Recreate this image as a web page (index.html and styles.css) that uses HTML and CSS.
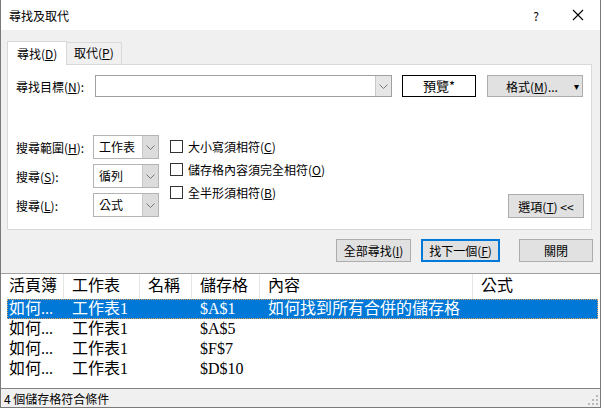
FILE: index.html
```html
<!DOCTYPE html>
<html lang="zh-Hant">
<head>
    <meta charset="UTF-8">
    <title>尋找及取代</title>
    <link rel="stylesheet" href="styles.css">
</head>
<body>
<div class="window">
    <div class="titlebar">
        <span class="title">尋找及取代</span>
        <span class="help">?</span>
        <span class="close">
            <svg width="12" height="12" viewBox="0 0 12 12"><path d="M1 1L11 11M11 1L1 11" stroke="#000" stroke-width="1.1" fill="none"/></svg>
        </span>
    </div>
    <div class="dialog">
        <div class="tabs">
            <span class="tab active">尋找(<u>D</u>)</span>
            <span class="tab">取代(<u>P</u>)</span>
        </div>
        <div class="panel">
            <div class="find_row">
                <span class="find_label">尋找目標(<u>N</u>):</span>
                <div class="find_input">
                    <span class="field"></span>
                    <span class="arrow"><svg width="9" height="5" viewBox="0 0 9 5"><path d="M0.5 0.5L4.5 4.5L8.5 0.5" stroke="#777" fill="none"/></svg></span>
                </div>
                <span class="preview">預覽*</span>
                <span class="btn format">格式(<u>M</u>)...<i class="caret">▾</i></span>
            </div>
            <div class="opts">
                <div class="combos">
                    <span class="opt_label">搜尋範圍(<u>H</u>):</span>
                    <div class="combo"><span class="val">工作表</span><span class="arrow"><svg width="9" height="5" viewBox="0 0 9 5"><path d="M0.5 0.5L4.5 4.5L8.5 0.5" stroke="#777" fill="none"/></svg></span></div>
                    <span class="opt_label">搜尋(<u>S</u>):</span>
                    <div class="combo"><span class="val">循列</span><span class="arrow"><svg width="9" height="5" viewBox="0 0 9 5"><path d="M0.5 0.5L4.5 4.5L8.5 0.5" stroke="#777" fill="none"/></svg></span></div>
                    <span class="opt_label">搜尋(<u>L</u>):</span>
                    <div class="combo"><span class="val">公式</span><span class="arrow"><svg width="9" height="5" viewBox="0 0 9 5"><path d="M0.5 0.5L4.5 4.5L8.5 0.5" stroke="#777" fill="none"/></svg></span></div>
                </div>
                <div class="checks">
                    <label class="check"><span class="box"></span>大小寫須相符(<u>C</u>)</label>
                    <label class="check"><span class="box"></span>儲存格內容須完全相符(<u>O</u>)</label>
                    <label class="check"><span class="box"></span>全半形須相符(<u>B</u>)</label>
                </div>
                <span class="btn options">選項(<u>T</u>) &lt;&lt;</span>
            </div>
        </div>
        <div class="actions">
            <span class="btn find_all">全部尋找(<u>I</u>)</span>
            <span class="btn find_next">找下一個(<u>F</u>)</span>
            <span class="btn close_btn">關閉</span>
        </div>
    </div>
    <div class="list">
        <div class="row head">
            <span class="c1">活頁簿</span><span class="c2">工作表</span><span class="c3">名稱</span><span class="c4">儲存格</span><span class="c5">內容</span><span class="c6">公式</span>
        </div>
        <div class="row sel">
            <span class="c1">如何...</span><span class="c2">工作表1</span><span class="c3"></span><span class="c4">$A$1</span><span class="c5">如何找到所有合併的儲存格</span><span class="c6"></span>
        </div>
        <div class="row">
            <span class="c1">如何...</span><span class="c2">工作表1</span><span class="c3"></span><span class="c4">$A$5</span><span class="c5"></span><span class="c6"></span>
        </div>
        <div class="row">
            <span class="c1">如何...</span><span class="c2">工作表1</span><span class="c3"></span><span class="c4">$F$7</span><span class="c5"></span><span class="c6"></span>
        </div>
        <div class="row">
            <span class="c1">如何...</span><span class="c2">工作表1</span><span class="c3"></span><span class="c4">$D$10</span><span class="c5"></span><span class="c6"></span>
        </div>
    </div>
    <div class="status">
        <span>4 個儲存格符合條件</span>
        <svg class="grip" width="10" height="10" viewBox="0 0 10 10" fill="#b8b8b8"><rect x="8" y="0" width="2" height="2"/><rect x="4" y="4" width="2" height="2"/><rect x="8" y="4" width="2" height="2"/><rect x="0" y="8" width="2" height="2"/><rect x="4" y="8" width="2" height="2"/><rect x="8" y="8" width="2" height="2"/></svg>
    </div>
</div>
</body>
</html>
```

FILE: styles.css
```css
html,body{margin:0;padding:0;}
body{font-family:"Noto Sans CJK TC","Noto Sans",sans-serif;font-size:12px;color:#000;}
u{text-decoration:underline;text-underline-offset:1px;}
.window{box-sizing:border-box;width:601px;height:408px;border:1px solid #7a7a7a;border-top:none;background:#f0f0f0;display:flex;flex-direction:column;overflow:hidden;}

.titlebar{height:30px;background:#fff;display:flex;align-items:center;flex:none;}
.title{padding-left:8px;flex:1;}
.help{width:20px;text-align:center;margin-right:26px;}
.close{width:12px;height:12px;margin-right:16px;display:flex;}

.dialog{padding:10px 0 0 6px;flex:none;}
.tabs{display:flex;align-items:flex-end;height:24px;}
.tab{box-sizing:border-box;height:22px;line-height:20px;padding:0 7px;border:1px solid #d9d9d9;border-bottom:none;background:#f0f0f0;}
.tab.active{height:24px;line-height:24px;width:60px;padding:0 0 0 9px;background:#fff;position:relative;top:1px;}
.tab+.tab{border-left:none;}

.panel{box-sizing:border-box;width:585px;height:166px;background:#fff;border:1px solid #d9d9d9;padding:10px 7px 0 8px;display:flex;flex-direction:column;}
.find_row{display:flex;align-items:center;height:22px;}
.find_label{width:79px;}
.find_input{box-sizing:border-box;width:297px;height:22px;border:1px solid #a0a0a0;display:flex;}
.find_input .field{flex:1;}
.arrow{width:15px;background:#e6e6e6;border-left:1px solid #c8c8c8;display:flex;align-items:center;justify-content:center;}
.preview{box-sizing:border-box;width:74px;height:22px;margin-left:10px;border:1px solid #000;text-align:center;line-height:20px;font-size:13px;}
.btn{box-sizing:border-box;display:flex;align-items:center;justify-content:center;height:23px;background:#e1e1e1;border:1px solid #adadad;}
.format{width:96px;height:22px;margin-left:11px;position:relative;padding-right:6px;}
.caret{position:absolute;right:3px;top:2px;font-style:normal;font-size:10px;}

.opts{display:flex;margin-top:38px;flex:1;padding-bottom:11px;}
.combos{display:grid;grid-template-columns:77px 66px;row-gap:5px;align-items:center;align-self:flex-start;}
.combo{box-sizing:border-box;height:24px;border:1px solid #b4b4b4;display:flex;}
.combo .val{flex:1;padding-left:5px;line-height:22px;}
.combo .arrow{width:15px;background:#dcdcdc;}
.checks{display:flex;flex-direction:column;gap:10px;margin-left:11px;padding-top:5px;}
.check{display:flex;align-items:center;height:13px;}
.box{box-sizing:border-box;width:13px;height:13px;border:1px solid #333;background:#fff;margin-right:5px;}
.options{width:76px;height:24px;margin-left:auto;align-self:flex-end;}

.actions{display:flex;justify-content:flex-end;padding:9px 7px 0 0;height:24px;}
.find_all{width:75px;}
.find_next{width:79px;margin-left:10px;border:2px solid #0078d7;}
.close_btn{width:74px;margin-left:19px;}

.list{flex:none;margin-top:10px;height:114px;background:#fff;border-top:1px solid #a0a0a0;border-bottom:1px solid #828282;padding-left:6px;font-family:"Liberation Serif","Noto Sans CJK TC",serif;font-size:16px;}
.row{display:flex;height:20px;line-height:20px;width:591px;white-space:nowrap;}
.row span{box-sizing:border-box;padding-left:2px;overflow:hidden;}
.row.head{height:25px;line-height:24px;}
.row.head span{border-right:1px solid #e5e5e5;padding-left:2px;}
.row.head .c6{border-right:none;}
.c1{width:57px;}
.c2{width:76px;padding-left:8px !important;}
.c3{width:52px;padding-left:8px !important;}
.c4{width:68px;padding-left:8px !important;}
.c5{width:213px;padding-left:8px !important;}
.c6{flex:1;padding-left:8px !important;}
.row.sel{background:#0078d7;color:#fff;outline:1px dotted #e0a060;outline-offset:-1px;}

.status{flex:1;display:flex;align-items:center;padding-left:3px;position:relative;}
.grip{position:absolute;right:2px;bottom:2px;}
```
